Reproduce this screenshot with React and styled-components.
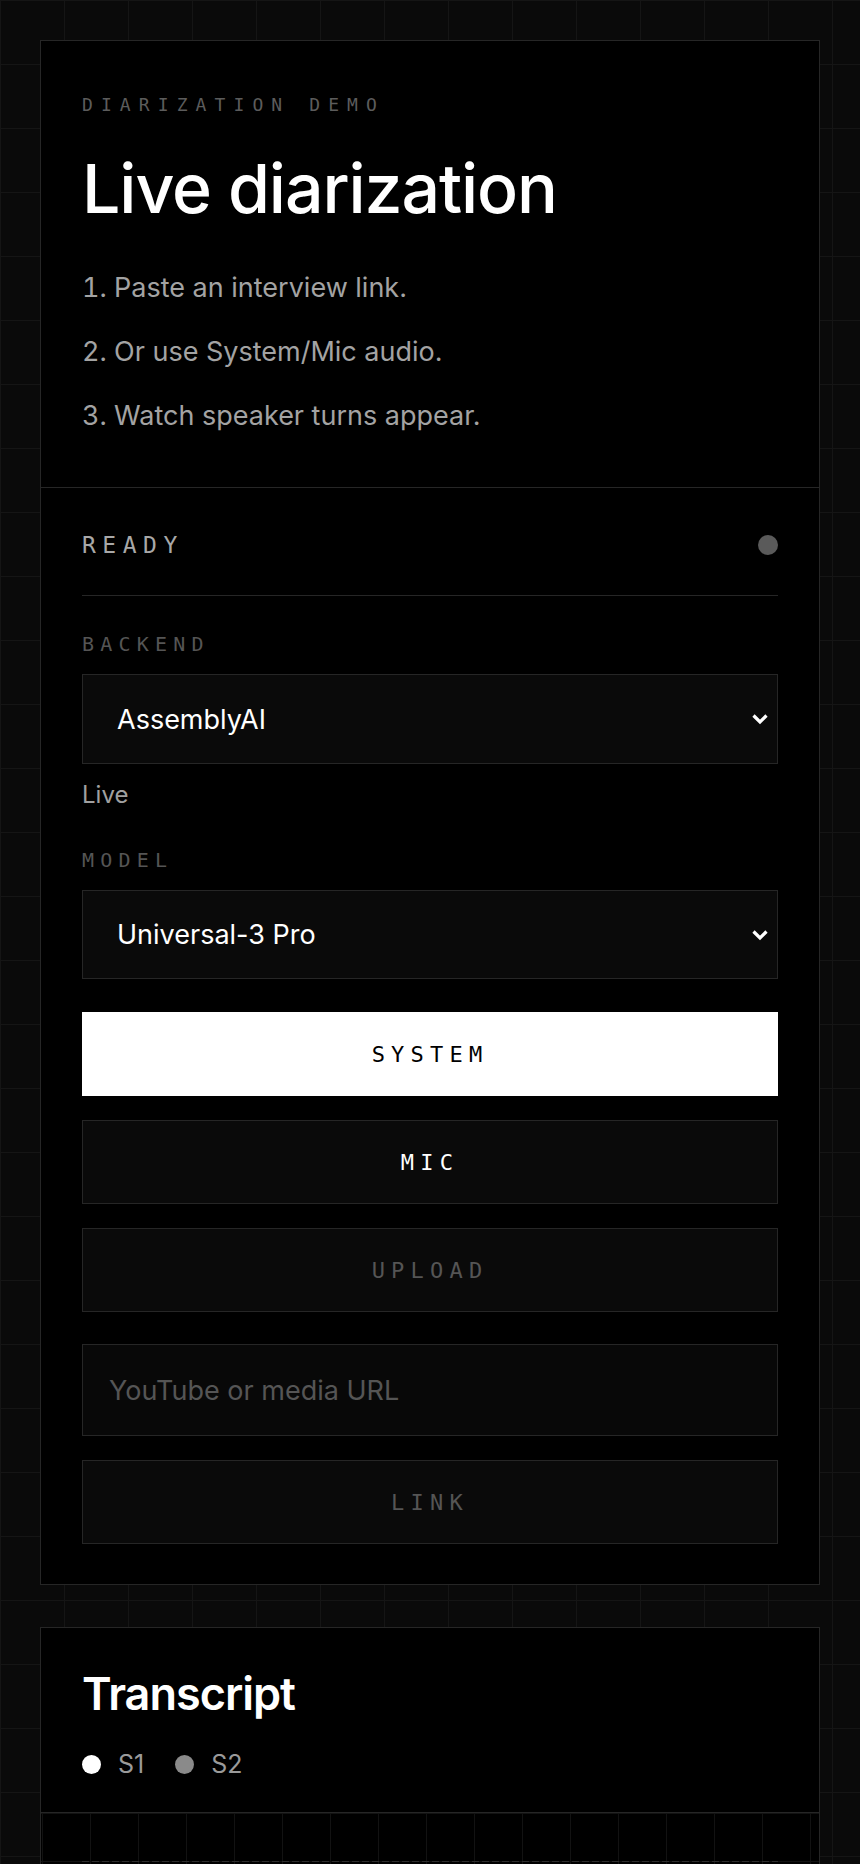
import React, { useState } from 'react'
import styled, { createGlobalStyle } from 'styled-components'

const sans = `Inter, "Noto Sans", "Liberation Sans", sans-serif`
const mono = `"DejaVu Sans Mono", "Liberation Mono", monospace`

const GlobalStyle = createGlobalStyle`
  html, body {
    margin: 0;
    padding: 0;
  }
  body {
    font-family: ${sans};
    color: #fff;
    background-color: #0a0a0a;
    background-image:
      linear-gradient(to right, #151515 1px, transparent 1px),
      linear-gradient(to bottom, #151515 1px, transparent 1px);
    background-size: 64px 64px;
  }
  * { box-sizing: border-box; }
`

const Page = styled.main`
  display: flex;
  flex-direction: column;
  gap: 42px;
  padding: 40px;
`

const Panel = styled.section`
  background: #000;
  border: 1px solid #262626;
`

const Intro = styled.header`
  padding: 52px 41px 51px;
  border-bottom: 1px solid #262626;
`

const Eyebrow = styled.div`
  font-family: ${mono};
  font-size: 18px;
  line-height: 24px;
  letter-spacing: 8.1px;
  color: #5c5c5c;
  text-transform: uppercase;
`

const Title = styled.h1`
  margin: 34px 0 0;
  font-size: 68px;
  line-height: 75px;
  font-weight: 500;
  letter-spacing: -1.1px;
  color: #fff;
`

const Steps = styled.ol`
  margin: 42px 0 0;
  padding: 0;
  list-style: decimal inside;
  display: flex;
  flex-direction: column;
  gap: 24px;

  li {
    font-size: 27px;
    line-height: 40px;
    color: #a3a3a3;
  }
`

const Controls = styled.div`
  padding: 43px 41px 40px;
  display: flex;
  flex-direction: column;
`

const StatusRow = styled.div`
  display: flex;
  align-items: center;
  justify-content: space-between;
  padding-bottom: 36px;
  border-bottom: 1px solid #262626;
`

const StatusText = styled.span`
  font-family: ${mono};
  font-size: 23px;
  line-height: 28px;
  letter-spacing: 6.5px;
  color: #a8a8a8;
`

const StatusDot = styled.span`
  width: 20px;
  height: 20px;
  border-radius: 50%;
  background: ${p => (p.$live ? '#e5e5e5' : '#5a5a5a')};
`

const FieldLabel = styled.label`
  display: block;
  margin-top: ${p => p.$top}px;
  font-family: ${mono};
  font-size: 20px;
  line-height: 24px;
  letter-spacing: 6.2px;
  color: #555;
`

const SelectWrap = styled.div`
  position: relative;
  margin-top: 18px;

  svg {
    position: absolute;
    right: 9px;
    top: 50%;
    transform: translateY(-50%);
    pointer-events: none;
  }
`

const Select = styled.select`
  appearance: none;
  width: 100%;
  height: ${p => p.$height}px;
  padding: 0 40px 0 34px;
  background: #0a0a0a;
  border: 1px solid #262626;
  border-radius: 0;
  color: #fff;
  font-family: ${sans};
  font-size: 27px;
  outline: none;
`

const Hint = styled.div`
  margin-top: 15px;
  font-size: 24px;
  line-height: 32px;
  color: #a0a0a0;
`

const ButtonStack = styled.div`
  display: flex;
  flex-direction: column;
  gap: 24px;
  margin-top: ${p => p.$top || 0}px;
`

const ActionButton = styled.button`
  height: 84px;
  width: 100%;
  border: 1px solid ${p => (p.$active ? '#fff' : '#262626')};
  background: ${p => (p.$active ? '#fff' : '#0a0a0a')};
  color: ${p => (p.$active ? '#000' : p.disabled ? '#555' : '#fff')};
  font-family: ${mono};
  font-size: 22px;
  letter-spacing: 6.2px;
  text-transform: uppercase;
  cursor: ${p => (p.disabled ? 'default' : 'pointer')};
  border-radius: 0;
`

const UrlInput = styled.input`
  width: 100%;
  height: 92px;
  padding: 0 26px;
  background: #080808;
  border: 1px solid #262626;
  border-radius: 0;
  color: #fff;
  font-family: ${sans};
  font-size: 27px;
  outline: none;

  &::placeholder {
    color: #555;
  }
`

const TranscriptHead = styled.header`
  padding: 38px 41px 34px;
  border-bottom: 1px solid #262626;
`

const TranscriptTitle = styled.h2`
  margin: 0;
  font-size: 45px;
  line-height: 55px;
  font-weight: 600;
  letter-spacing: -1px;
`

const Legend = styled.div`
  display: flex;
  align-items: center;
  gap: 31px;
  margin-top: 29px;
`

const LegendItem = styled.span`
  display: flex;
  align-items: center;
  gap: 17px;
  font-size: 25px;
  line-height: 28px;
  color: #9a9a9a;

  &::before {
    content: '';
    width: 19px;
    height: 19px;
    border-radius: 50%;
    background: ${p => p.$color};
  }
`

const TranscriptBody = styled.div`
  padding: 48px 41px;
  min-height: 360px;
  background-color: #000;
  background-image: linear-gradient(to right, #121212 1px, transparent 1px),
    linear-gradient(to bottom, #121212 1px, transparent 1px);
  background-size: 48px 48px;
  background-position: 1px 0;
`

const dash = '#2e2e2e'

const EmptyBox = styled.div`
  height: 240px;
  background:
    repeating-linear-gradient(90deg, ${dash} 0 7px, transparent 7px 10px) top / 100% 1px no-repeat,
    repeating-linear-gradient(90deg, ${dash} 0 7px, transparent 7px 10px) bottom / 100% 1px no-repeat,
    repeating-linear-gradient(0deg, ${dash} 0 7px, transparent 7px 10px) left / 1px 100% no-repeat,
    repeating-linear-gradient(0deg, ${dash} 0 7px, transparent 7px 10px) right / 1px 100% no-repeat;
`

const Chevron = () => (
  <svg width="18" height="12" viewBox="0 0 18 12" fill="none">
    <polyline points="2.5,2.5 9,9 15.5,2.5" stroke="#fff" strokeWidth="3.2" strokeLinejoin="miter" />
  </svg>
)

const steps = [
  'Paste an interview link.',
  'Or use System/Mic audio.',
  'Watch speaker turns appear.'
]

const speakers = [
  { id: 'S1', color: '#fff' },
  { id: 'S2', color: '#8a8a8a' }
]

export default function App() {
  const [backend, setBackend] = useState('assemblyai')
  const [model, setModel] = useState('universal-3-pro')
  const [source, setSource] = useState('system')
  const [url, setUrl] = useState('')

  return (
    <>
      <GlobalStyle />
      <Page>
        <Panel>
          <Intro>
            <Eyebrow>Diarization demo</Eyebrow>
            <Title>Live diarization</Title>
            <Steps>
              {steps.map(s => (
                <li key={s}>{s}</li>
              ))}
            </Steps>
          </Intro>

          <Controls>
            <StatusRow>
              <StatusText>READY</StatusText>
              <StatusDot />
            </StatusRow>

            <FieldLabel $top={36}>BACKEND</FieldLabel>
            <SelectWrap>
              <Select $height={90} value={backend} onChange={e => setBackend(e.target.value)}>
                <option value="assemblyai">AssemblyAI</option>
                <option value="local">Local</option>
              </Select>
              <Chevron />
            </SelectWrap>
            <Hint>Live</Hint>

            <FieldLabel $top={37}>MODEL</FieldLabel>
            <SelectWrap>
              <Select $height={89} value={model} onChange={e => setModel(e.target.value)}>
                <option value="universal-3-pro">Universal-3 Pro</option>
                <option value="universal-2">Universal-2</option>
              </Select>
              <Chevron />
            </SelectWrap>

            <ButtonStack $top={33}>
              <ActionButton $active={source === 'system'} onClick={() => setSource('system')}>
                System
              </ActionButton>
              <ActionButton $active={source === 'mic'} onClick={() => setSource('mic')}>
                Mic
              </ActionButton>
              <ActionButton disabled>Upload</ActionButton>
            </ButtonStack>

            <ButtonStack $top={32}>
              <UrlInput
                placeholder="YouTube or media URL"
                value={url}
                onChange={e => setUrl(e.target.value)}
              />
              <ActionButton disabled={!url}>Link</ActionButton>
            </ButtonStack>
          </Controls>
        </Panel>

        <Panel>
          <TranscriptHead>
            <TranscriptTitle>Transcript</TranscriptTitle>
            <Legend>
              {speakers.map(s => (
                <LegendItem key={s.id} $color={s.color}>{s.id}</LegendItem>
              ))}
            </Legend>
          </TranscriptHead>
          <TranscriptBody>
            <EmptyBox />
          </TranscriptBody>
        </Panel>
      </Page>
    </>
  )
}
